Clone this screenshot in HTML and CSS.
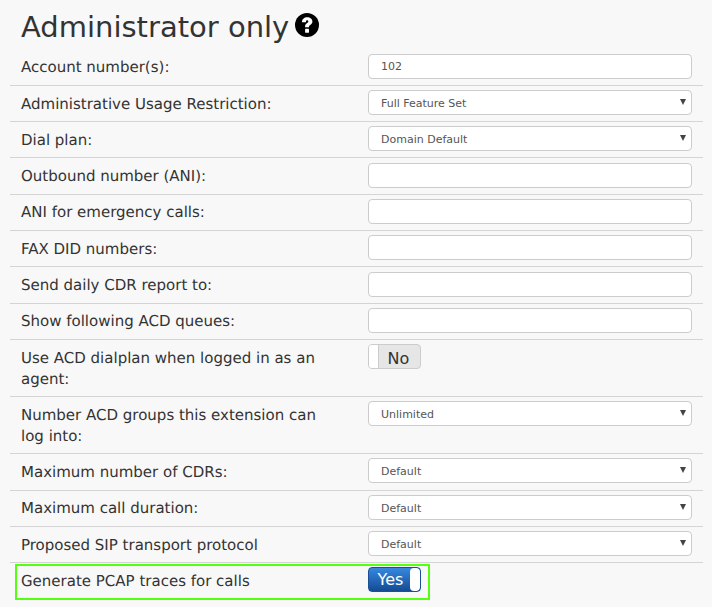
FILE: index.html
```html
<!DOCTYPE html>
<html lang="en">
<head>
<meta charset="utf-8">
<title>Administrator only</title>
<link rel="stylesheet" href="styles.css">
</head>
<body>
<main class="panel">
  <h2 class="title">Administrator only
    <svg class="help" viewBox="0 0 24 24" width="24" height="24" aria-hidden="true">
      <circle cx="12" cy="12" r="12" fill="#000"/>
      <path d="M6.900 9.200c.1-3 2.300-5 5.300-5 3 0 5.200 1.700 5.200 4.200 0 1.700-.9 2.700-2.100 3.500-1 .7-1.300 1-1.300 1.900v.5H10.100v-.9c0-1.500.6-2.400 1.700-3.200 1-.7 1.500-1.100 1.500-1.800 0-.7-.5-1.100-1.100-1.100-.8 0-1.200.6-1.300 1.900H6.900z" fill="#fff"/>
      <rect x="10.100" y="15.800" width="3.900" height="3.900" rx=".4" fill="#fff"/>
    </svg>
  </h2>
  <div class="row"><label class="lbl">Account number(s):</label><div class="ctl"><input class="field" type="text" value="102"></div></div>
  <div class="row"><label class="lbl">Administrative Usage Restriction:</label><div class="ctl"><div class="sel">Full Feature Set</div></div></div>
  <div class="row"><label class="lbl">Dial plan:</label><div class="ctl"><div class="sel">Domain Default</div></div></div>
  <div class="row"><label class="lbl">Outbound number (ANI):</label><div class="ctl"><input class="field" type="text"></div></div>
  <div class="row"><label class="lbl">ANI for emergency calls:</label><div class="ctl"><input class="field" type="text"></div></div>
  <div class="row"><label class="lbl">FAX DID numbers:</label><div class="ctl"><input class="field" type="text"></div></div>
  <div class="row"><label class="lbl">Send daily CDR report to:</label><div class="ctl"><input class="field" type="text"></div></div>
  <div class="row"><label class="lbl">Show following ACD queues:</label><div class="ctl"><input class="field" type="text"></div></div>
  <div class="row"><label class="lbl">Use ACD dialplan when logged in as an agent:</label><div class="ctl"><div class="toggle off"><span class="knob"></span><span class="state">No</span></div></div></div>
  <div class="row"><label class="lbl">Number ACD groups this extension can log into:</label><div class="ctl"><div class="sel">Unlimited</div></div></div>
  <div class="row"><label class="lbl">Maximum number of CDRs:</label><div class="ctl"><div class="sel">Default</div></div></div>
  <div class="row"><label class="lbl">Maximum call duration:</label><div class="ctl"><div class="sel">Default</div></div></div>
  <div class="row"><label class="lbl">Proposed SIP transport protocol</label><div class="ctl"><div class="sel">Default</div></div></div>
  <div class="row last"><label class="lbl">Generate PCAP traces for calls</label><div class="ctl"><div class="toggle on"><span class="state">Yes</span><span class="knob"></span></div></div></div>
</main>
</body>
</html>
```
FILE: styles.css
```css
* { box-sizing: border-box; }
html, body { margin: 0; padding: 0; }
body {
  background: #f8f8f8;
  font-family: "DejaVu Sans", sans-serif;
  color: #333;
  height: 607px;
  overflow: hidden;
}
.panel { padding: 0 9px 0 10px; }
.title {
  margin: 0;
  padding: 8px 0 0 11px;
  height: 49.600px;
  font-size: 29px;
  line-height: 38px;
  font-weight: 400;
  display: flex;
  align-items: flex-start;
  gap: 6px;
}
.help { margin-top: 5px; flex: none; }
.row {
  display: flex;
  align-items: flex-start;
  border-bottom: 1px solid #d4d4d4;
  padding: 4.200px 11px 5.150px 11px;
  min-height: 36.300px;
  position: relative;
}
.lbl {
  width: 347px;
  flex: none;
  font-size: 15px;
  line-height: 21px;
  padding: 3.500px 30px 1.300px 0;
  text-rendering: geometricPrecision;
}
.ctl { flex: 1; }
.field, .sel {
  display: block;
  width: 324px;
  height: 25px;
  background: #fff;
  border: 1px solid #ccc;
  border-radius: 4px;
  font-family: inherit;
  font-size: 11px;
  color: #555;
}
.field { padding: 0 12px; outline: none; line-height: 23px; }
.sel { padding: 0 12px; position: relative; line-height: 25px; }
.sel::after {
  content: "";
  position: absolute;
  right: 5px;
  top: 8px;
  border-left: 3px solid transparent;
  border-right: 3px solid transparent;
  border-top: 6px solid #444;
}
.toggle {
  display: flex;
  width: 53px;
  height: 25px;
  border-radius: 4px;
  overflow: hidden;
  font-size: 16px;
}
.toggle .state { flex: 1; text-align: center; }
.toggle .knob { width: 10px; flex: none; background: #fff; }
.toggle.off {
  border: 1px solid #ccc;
  background: #e6e6e6;
  color: #333;
  line-height: 28px;
}
.toggle.off .state { padding-right: 2px; }
.toggle.off .knob { border-right: 1px solid #ccc; }
.toggle.on {
  border: 1px solid #1c4f95;
  background: linear-gradient(#3588e0, #144b93);
  color: #fff;
  line-height: 24px;
}
.toggle.on .state { padding-left: 2px; }
.toggle.on .knob { border-radius: 4px; }
.last { border-bottom: none; }
.last::after {
  content: "";
  box-sizing: border-box;
  position: absolute;
  left: 5px;
  top: 1px;
  width: 415px;
  height: 36px;
  border: 2px solid #55ff11;
}
```
